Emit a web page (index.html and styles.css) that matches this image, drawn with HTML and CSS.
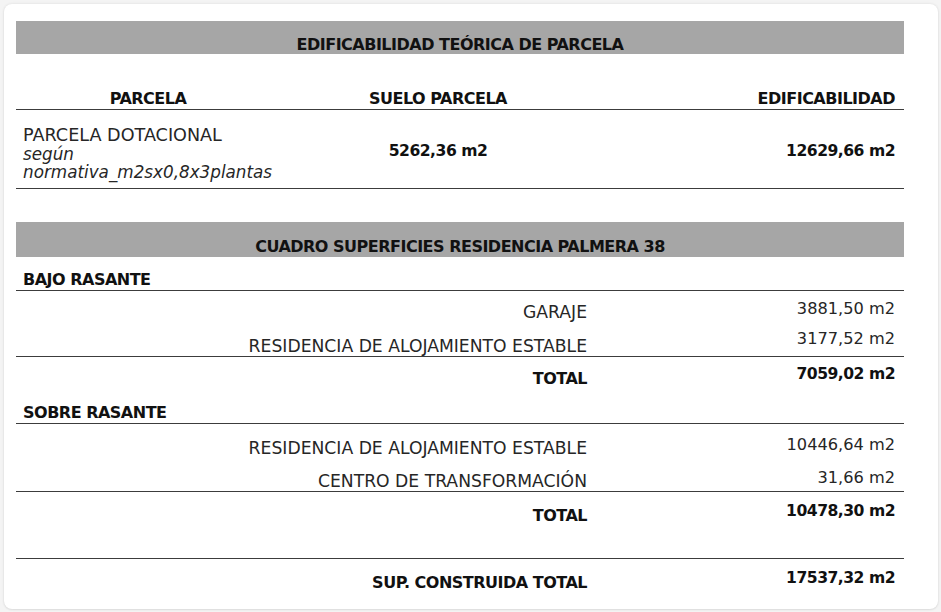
FILE: index.html
```html
<!DOCTYPE html>
<html lang="es">
<head>
<meta charset="utf-8">
<title>Edificabilidad</title>
<link rel="stylesheet" href="styles.css">
</head>
<body>
<div class="card">
  <div class="sheet">
    <div class="bar bar-first">EDIFICABILIDAD TEÓRICA DE PARCELA</div>

    <div class="grid3 head">
      <div class="hcell center">PARCELA</div>
      <div class="hcell center">SUELO PARCELA</div>
      <div class="hcell right">EDIFICABILIDAD</div>
    </div>

    <div class="grid3 data">
      <div class="desc"><span class="desc-main">PARCELA DOTACIONAL</span><br><em>según</em><br><em>normativa_m2sx0,8x3plantas</em></div>
      <div class="num center">5262,36 m2</div>
      <div class="num right">12629,66 m2</div>
    </div>

    <div class="bar bar-second">CUADRO SUPERFICIES RESIDENCIA PALMERA 38</div>

    <div class="section sec-bajo">BAJO RASANTE</div>
    <div class="row r-31"><span class="label">GARAJE</span><span class="value">3881,50 m2</span></div>
    <div class="row r-35 ruled"><span class="label">RESIDENCIA DE ALOJAMIENTO ESTABLE</span><span class="value v-high">3177,52 m2</span></div>
    <div class="row r-31 total"><span class="label">TOTAL</span><span class="value">7059,02 m2</span></div>

    <div class="section sec-sobre">SOBRE RASANTE</div>
    <div class="row r-34"><span class="label">RESIDENCIA DE ALOJAMIENTO ESTABLE</span><span class="value">10446,64 m2</span></div>
    <div class="row r-34 ruled"><span class="label">CENTRO DE TRANSFORMACIÓN</span><span class="value">31,66 m2</span></div>
    <div class="row r-33 total"><span class="label">TOTAL</span><span class="value">10478,30 m2</span></div>
    <div class="row r-34 ruled"><span class="label"></span><span class="value"></span></div>
    <div class="row r-33 total"><span class="label">SUP. CONSTRUIDA TOTAL</span><span class="value">17537,32 m2</span></div>
  </div>
</div>
</body>
</html>
```

FILE: styles.css
```css
* { box-sizing: border-box; }

html, body {
  margin: 0;
  padding: 0;
  background: #f4f4f4;
}

body {
  font-family: "DejaVu Sans", "Liberation Sans", sans-serif;
  color: #151515;
}

.card {
  margin: 4px;
  width: 934px;
  height: 605px;
  background: #ffffff;
  border-radius: 8px;
  box-shadow: 0 0 3px rgba(0, 0, 0, 0.10), 0 1px 2px rgba(0, 0, 0, 0.06);
  padding: 17px 34px 0 12px;
}

.sheet {
  width: 888px;
}

.bar {
  background: #a6a6a6;
  display: flex;
  align-items: flex-end;
  justify-content: center;
  font-weight: bold;
  font-size: 16px;
  letter-spacing: -0.5px;
  line-height: 19px;
  color: #111;
}

.bar-first {
  height: 33px;
}

.bar-second {
  margin-top: 33px;
  height: 35px;
  padding-bottom: 1px;
}

.grid3 {
  display: grid;
  grid-template-columns: 264px 316px 1fr;
  border-bottom: 1px solid #3c3c3c;
}

.head {
  height: 56px;
  align-items: end;
  padding-bottom: 1px;
}

.hcell {
  font-weight: bold;
  font-size: 16px;
  letter-spacing: -0.5px;
  line-height: 19px;
  color: #111;
}

.center { text-align: center; }
.right { text-align: right; padding-right: 9px; }

.data {
  height: 79px;
}

.desc {
  align-self: end;
  padding: 0 0 6px 7px;
  font-size: 16.8px;
  line-height: 18.7px;
  color: #262626;
}

.desc-main {
  font-size: 17.6px;
}

.desc em {
  font-style: italic;
}

.num {
  align-self: start;
  padding-top: 32px;
  font-weight: bold;
  font-size: 15.6px;
  letter-spacing: -0.5px;
  line-height: 19px;
  color: #111;
}

.section {
  display: flex;
  align-items: flex-end;
  padding: 0 0 1px 7px;
  font-weight: bold;
  font-size: 16px;
  letter-spacing: -0.5px;
  line-height: 19px;
  color: #111;
  border-bottom: 1px solid #3c3c3c;
}

.sec-bajo { height: 34px; }
.sec-sobre { height: 36px; }

.row {
  display: grid;
  grid-template-columns: 580px 1fr;
  align-items: end;
  line-height: 19px;
  color: #262626;
}

.row.ruled {
  border-bottom: 1px solid #3c3c3c;
}

.r-31 { height: 31px; }
.r-33 { height: 33px; }
.r-34 { height: 34px; }
.r-35 { height: 35px; }

.label {
  text-align: right;
  padding-right: 9px;
  font-size: 17.2px;
}

.value {
  text-align: right;
  padding-right: 9px;
  padding-bottom: 4.5px;
  font-size: 16.2px;
}

.value.v-high {
  padding-bottom: 8px;
}

.total .label,
.total .value {
  font-weight: bold;
  font-size: 16px;
  letter-spacing: -0.5px;
  color: #111;
}

.total .value {
  font-size: 15.6px;
}
```
